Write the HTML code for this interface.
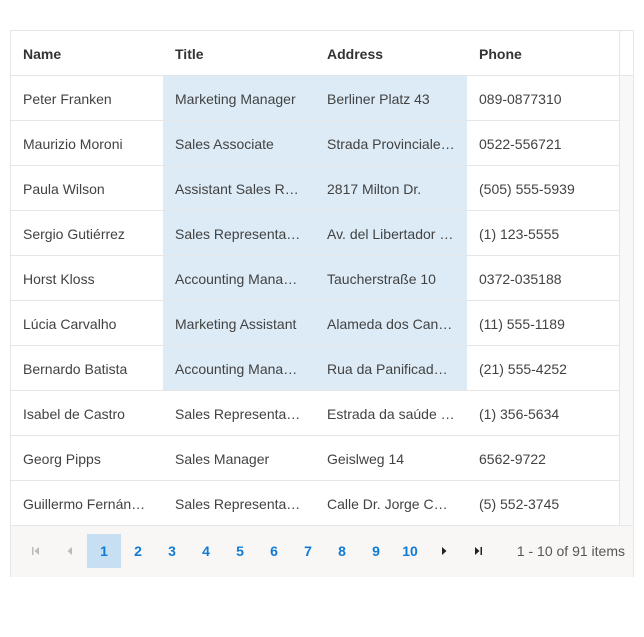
<!DOCTYPE html>
<html><head><style>
body{margin:0;background:#fff;font-family:"Liberation Sans",sans-serif;font-size:14px;color:#424242;}
.g{position:absolute;left:10px;top:30px;width:622px;height:545px;border:1px solid #e6e6e6;}
table{position:absolute;left:0;top:0;border-collapse:collapse;table-layout:fixed;width:608px}
td,th{padding:2px 12px 0;text-align:left;white-space:nowrap;overflow:hidden;text-overflow:ellipsis;border-bottom:1px solid #e6e6e6;box-sizing:border-box}
tr{height:45px}
tr.h{height:44px}
th{font-weight:bold;color:#333;height:44px}
td{height:45px}
.s{background:#dcebf6}
.sb{position:absolute;left:608px;top:45px;width:14px;height:449px;background:#f8f8f8;border-left:1px solid #e6e6e6;box-sizing:border-box}
.hd{position:absolute;left:608px;top:0;width:14px;height:44px;border-left:1px solid #e6e6e6;border-bottom:1px solid #e6e6e6}
.p{position:absolute;left:0;top:494px;width:622px;height:51px;background:#f8f7f6;border-top:1px solid #e6e6e6}
.b{position:absolute;top:8px;width:34px;height:34px;line-height:34px;text-align:center;color:#0f7bd5;font-weight:bold;font-size:14px}
.b svg{position:absolute;left:12px;top:12px}
</style></head><body>
<div class="g">
<table>
<colgroup><col style="width:152px"><col style="width:152px"><col style="width:152px"><col style="width:152px"></colgroup>
<tr class="h"><th>Name</th><th>Title</th><th>Address</th><th>Phone</th></tr>
<tr><td>Peter Franken</td><td class="s">Marketing Manager</td><td class="s">Berliner Platz 43</td><td>089-0877310</td></tr>
<tr><td>Maurizio Moroni</td><td class="s">Sales Associate</td><td class="s">Strada Provinciale 124</td><td>0522-556721</td></tr>
<tr><td>Paula Wilson</td><td class="s">Assistant Sales Representative</td><td class="s">2817 Milton Dr.</td><td>(505) 555-5939</td></tr>
<tr><td>Sergio Gutiérrez</td><td class="s">Sales Representative</td><td class="s">Av. del Libertador 900</td><td>(1) 123-5555</td></tr>
<tr><td>Horst Kloss</td><td class="s">Accounting Manager</td><td class="s">Taucherstraße 10</td><td>0372-035188</td></tr>
<tr><td>Lúcia Carvalho</td><td class="s">Marketing Assistant</td><td class="s">Alameda dos Canàrios, 891</td><td>(11) 555-1189</td></tr>
<tr><td>Bernardo Batista</td><td class="s">Accounting Manager</td><td class="s">Rua da Panificadora, 12</td><td>(21) 555-4252</td></tr>
<tr><td>Isabel de Castro</td><td>Sales Representative</td><td>Estrada da saúde n. 58</td><td>(1) 356-5634</td></tr>
<tr><td>Georg Pipps</td><td>Sales Manager</td><td>Geislweg 14</td><td>6562-9722</td></tr>
<tr><td>Guillermo Fernández</td><td>Sales Representative</td><td>Calle Dr. Jorge Cash 321</td><td>(5) 552-3745</td></tr>
</table>
<div class="hd"></div><div class="sb"></div>
<div class="p">
<div class="b" style="left:8px"><svg width="10" height="10"><rect x="1" y="1" width="1.5" height="8" fill="#bbb"/><path d="M8 1 L3.5 5 L8 9Z" fill="#bbb"/></svg></div>
<div class="b" style="left:42px"><svg width="10" height="10"><path d="M7 1 L2.5 5 L7 9Z" fill="#bbb"/></svg></div>
<div class="b" style="left:76px;background:#c6dff2">1</div>
<div class="b" style="left:110px">2</div>
<div class="b" style="left:144px">3</div>
<div class="b" style="left:178px">4</div>
<div class="b" style="left:212px">5</div>
<div class="b" style="left:246px">6</div>
<div class="b" style="left:280px">7</div>
<div class="b" style="left:314px">8</div>
<div class="b" style="left:348px">9</div>
<div class="b" style="left:382px">10</div>
<div class="b" style="left:416px"><svg width="10" height="10"><path d="M3 1 L7.5 5 L3 9Z" fill="#222"/></svg></div>
<div class="b" style="left:450px"><svg width="10" height="10"><path d="M2 1 L6.5 5 L2 9Z" fill="#222"/><rect x="7.5" y="1" width="1.5" height="8" fill="#222"/></svg></div>
<div style="position:absolute;right:8px;top:8px;line-height:34px;color:#555">1 - 10 of 91 items</div>
</div>
</div>
</body></html>
